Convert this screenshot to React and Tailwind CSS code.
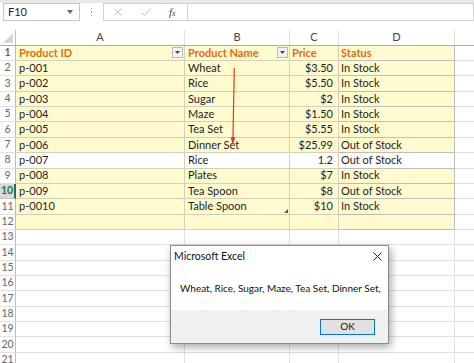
import React from "react"

const YELLOW = "bg-[#FFFBCF]"

const DATA = [
  ["p-001", "Wheat", "$3.50", "In Stock"],
  ["p-002", "Rice", "$5.50", "In Stock"],
  ["p-003", "Sugar", "$2", "In Stock"],
  ["p-004", "Maze", "$1.50", "In Stock"],
  ["p-005", "Tea Set", "$5.55", "In Stock"],
  ["p-006", "Dinner Set", "$25.99", "Out of Stock"],
  ["p-007", "Rice", "1.2", "Out of Stock"],
  ["p-008", "Plates", "$7", "In Stock"],
  ["p-009", "Tea Spoon", "$8", "Out of Stock"],
  ["p-0010", "Table Spoon", "$10", "In Stock"],
  ["", "", "", ""],
]

function FilterBtn() {
  return (
    <div className="w-[11px] h-[11px] border border-[#B9B9B9] bg-[#F4F4F4] flex items-center justify-center shrink-0">
      <svg width="5" height="3" viewBox="0 0 5 3"><path d="M0 0h5L2.5 3z" fill="#444" /></svg>
    </div>
  )
}

function RowHead({ n, active }) {
  return (
    <div className={`w-[16px] shrink-0 border-r border-b flex items-center justify-center text-[10.5px] ${active ? "bg-[#DADADA] text-[#217346] font-bold border-r-2 border-r-[#217346] border-b-[#C8C8C8]" : "text-[#666] border-r-[#BDBDBD] border-b-[#E1E1E1]"}`}>
      {n}
    </div>
  )
}

export default function App() {
  return (
    <div className="relative w-[474px] h-[363px] overflow-hidden bg-white font-['Lato',sans-serif] text-[#1e1e1e]">
      {/* formula bar */}
      <div className="h-[3px] bg-[#E8E8E8]" />
      <div className="flex h-[18px] items-stretch">
        <div className="ml-[3px] w-[77px] border border-[#C6C6C6] flex items-center justify-between pl-[4px] pr-[6px] text-[11px]">
          <span>F10</span>
          <svg width="6" height="4" viewBox="0 0 6 4"><path d="M0 0h6L3 4z" fill="#666" /></svg>
        </div>
        <div className="w-[23px] flex flex-col items-center justify-center gap-[2px]">
          <span className="w-[1.5px] h-[1.5px] bg-[#9A9A9A]" />
          <span className="w-[1.5px] h-[1.5px] bg-[#9A9A9A]" />
          <span className="w-[1.5px] h-[1.5px] bg-[#9A9A9A]" />
        </div>
        <div className="w-[85px] border border-[#D0D0D0] flex items-center">
          <svg className="ml-[10px]" width="8" height="8" viewBox="0 0 8 8"><path d="M0.5 0.5l7 7M7.5 0.5l-7 7" stroke="#BEBEBE" strokeWidth="1" /></svg>
          <svg className="ml-[19px]" width="10" height="8" viewBox="0 0 10 8"><path d="M0.5 4.5l3 3 6-7" stroke="#BEBEBE" strokeWidth="1" fill="none" /></svg>
          <span className="ml-[18px] font-['Liberation_Serif',serif] italic text-[11px] text-[#444]">f<span className="text-[8px]">x</span></span>
        </div>
        <div className="flex-1 border border-l-0 border-[#D0D0D0]" />
      </div>
      <div className="h-[9px]" />

      {/* column headers */}
      <div className="flex h-[15.6px] text-[11px] text-[#444] border-b border-[#ABABAB]">
        <div className="w-[16px] shrink-0 border-r border-[#BDBDBD] relative">
          <svg className="absolute right-[2px] bottom-[2px]" width="10" height="10" viewBox="0 0 10 10"><path d="M10 0V10H0z" fill="#D6D6D6" /></svg>
        </div>
        <div className="w-[169px] shrink-0 border-r border-[#E1E1E1] flex items-center justify-center">A</div>
        <div className="w-[105px] shrink-0 border-r border-[#E1E1E1] flex items-center justify-center">B</div>
        <div className="w-[49px] shrink-0 border-r border-[#E1E1E1] flex items-center justify-center">C</div>
        <div className="w-[116px] shrink-0 border-r border-[#E1E1E1] flex items-center justify-center">D</div>
        <div className="flex-1" />
      </div>

      {/* row 1 header */}
      <div className="flex h-[15.4px] text-[11px] font-bold text-[#E46C0A]">
        <RowHead n={1} />
        <div className={`w-[169px] shrink-0 ${YELLOW} border-r border-b border-[#D2D0B8] flex items-center justify-between pl-[3px] pr-[1px]`}>
          <span>Product ID</span>
          <FilterBtn />
        </div>
        <div className={`w-[105px] shrink-0 ${YELLOW} border-r border-b border-[#D2D0B8] flex items-center justify-between pl-[3px] pr-[1px]`}>
          <span>Product Name</span>
          <FilterBtn />
        </div>
        <div className={`w-[49px] shrink-0 ${YELLOW} border-r border-b border-[#D2D0B8] flex items-center pl-[2px]`}>Price</div>
        <div className={`w-[116px] shrink-0 ${YELLOW} border-r border-b border-[#BDBDBD] flex items-center pl-[2px]`}>Status</div>
        <div className="flex-1 border-b border-[#E1E1E1]" />
      </div>

      {DATA.map((r, i) => {
        const n = i + 2
        const bg = n === 8 ? "bg-white" : YELLOW
        return (
          <div key={n} className="flex h-[15.36px] text-[11px]">
            <RowHead n={n} active={n === 10} />
            <div className={`w-[169px] shrink-0 ${bg} border-r border-b border-[#D2D0B8] flex items-center pl-[3px]`}>{r[0]}</div>
            <div className={`w-[105px] shrink-0 ${bg} border-r border-b border-[#D2D0B8] flex items-center pl-[3px] relative`}>
              {r[1]}
              {n === 11 && (
                <svg className="absolute right-[1px] bottom-[1px]" width="4" height="4" viewBox="0 0 4 4"><path d="M4 0V4H0z" fill="#555" /></svg>
              )}
            </div>
            <div className={`w-[49px] shrink-0 ${bg} border-r border-b border-[#D2D0B8] flex items-center justify-end pr-[5px]`}>{r[2]}</div>
            <div className={`w-[116px] shrink-0 ${bg} border-r border-b border-[#BDBDBD] flex items-center pl-[2px]`}>{r[3]}</div>
            <div className="flex-1 border-b border-[#E1E1E1]" />
          </div>
        )
      })}

      {Array.from({ length: 9 }, (_, i) => i + 13).map(n => (
        <div key={n} className="flex h-[15.36px] text-[11px]">
          <RowHead n={n} />
          <div className="w-[169px] shrink-0 border-r border-b border-[#E1E1E1]" />
          <div className="w-[105px] shrink-0 border-r border-b border-[#E1E1E1]" />
          <div className="w-[49px] shrink-0 border-r border-b border-[#E1E1E1]" />
          <div className="w-[116px] shrink-0 border-r border-b border-[#E1E1E1]" />
          <div className="flex-1 border-b border-[#E1E1E1]" />
        </div>
      ))}

      {/* red arrow */}
      <svg className="absolute left-0 top-0 pointer-events-none" width="474" height="363">
        <path d="M234.3 68 L232.9 142" stroke="#E0362C" strokeWidth="1.2" fill="none" />
        <path d="M230.6 137 L232.8 145 L235.3 137.2 z" fill="#E0362C" />
      </svg>

      {/* message box */}
      <div className="absolute left-[170px] top-[245px] w-[219px] h-[99px] bg-white border border-[#8C8C8C] shadow-[2px_3px_8px_rgba(0,0,0,0.35)] flex flex-col font-['Lato',sans-serif]">
        <div className="h-[21px] flex items-center justify-between pl-[3px] pr-[6px] text-[10.5px] text-[#111]">
          <span>Microsoft Excel</span>
          <svg width="9" height="9" viewBox="0 0 9 9"><path d="M0.5 0.5l8 8M8.5 0.5l-8 8" stroke="#222" strokeWidth="1" /></svg>
        </div>
        <div className="flex-1 flex items-center pl-[9px] text-[10px] text-[#111] whitespace-nowrap">Wheat, Rice, Sugar, Maze, Tea Set, Dinner Set,</div>
        <div className="h-[33px] bg-[#F0F0F0] flex items-center justify-end pr-[13px]">
          <div className="w-[55px] h-[16px] border border-[#0078D7] bg-[#E1E1E1] flex items-center justify-center text-[10px] text-[#111]">OK</div>
        </div>
      </div>
    </div>
  )
}
